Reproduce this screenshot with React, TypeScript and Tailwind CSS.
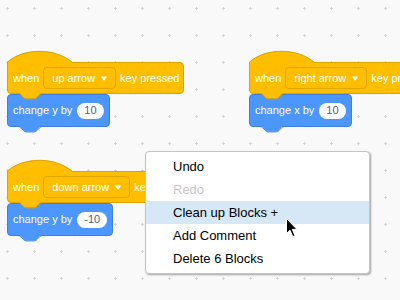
import React from "react";

const Cap = ({ fill, stroke }: { fill: string; stroke: string }) => (
  <svg
    width="67"
    height="15"
    viewBox="0 0 67 15"
    className="absolute left-[-1px] top-[-13px] overflow-visible"
  >
    <path d="M0,15 L0,12 C17,-2.8 48,-2.8 65.5,12.5 L65.5,15 Z" fill={fill} />
    <path d="M0.5,15 L0.5,12 C17.4,-2.3 48,-2.3 65.3,12.3" fill="none" stroke={stroke} strokeWidth="1" />
  </svg>
);

const Tab = ({ fill, stroke }: { fill: string; stroke: string }) => (
  <svg width="26" height="7" viewBox="0 0 26 7" className="absolute left-[10px] top-full overflow-visible">
    <path
      d="M0,-1 L0,0 c1.35,0 2.03,0.68 2.7,1.35 l2.7,2.7 c0.68,0.68 1.35,1.35 2.7,1.35 h8.1 c1.35,0 2.03,-0.68 2.7,-1.35 l2.7,-2.7 c0.68,-0.68 1.35,-1.35 2.7,-1.35 L24.3,-1 Z"
      fill={fill}
    />
    <path
      d="M0,0.5 c1.35,0 2.03,0.68 2.7,1.35 l2.7,2.7 c0.68,0.68 1.35,1.35 2.7,1.35 h8.1 c1.35,0 2.03,-0.68 2.7,-1.35 l2.7,-2.7 c0.68,-0.68 1.35,-1.35 2.7,-1.35"
      fill="none"
      stroke={stroke}
      strokeWidth="1"
    />
  </svg>
);

const Dropdown = ({ label }: { label: string }) => (
  <div className="flex h-[22px] items-center rounded-[4px] border border-[#e0a700] pl-[8px] pr-[8px]">
    <span>{label}</span>
    <svg width="6" height="5" viewBox="0 0 6 5" className="ml-[6px]">
      <path d="M0.8,1 L5.2,1 L3,3.8 Z" fill="white" stroke="white" strokeWidth="1.2" strokeLinejoin="round" />
    </svg>
  </div>
);

const Script = ({ keyName, verb, value, pos }: { keyName: string; verb: string; value: string; pos: string }) => (
  <div className={`absolute flex flex-col items-start ${pos}`}>
    <div className="relative z-10 flex h-[32px] w-max items-center gap-[4px] rounded-r-[4px] rounded-bl-[4px] border border-[#dba400] bg-[#ffbf00] pl-[5px] pr-[4px] text-white">
      <Cap fill="#ffbf00" stroke="#dba400" />
      <span>when</span>
      <Dropdown label={keyName} />
      <span>key pressed</span>
      <Tab fill="#ffbf00" stroke="#dba400" />
    </div>
    <div className="relative flex h-[33px] w-max items-center gap-[5px] rounded-[4px] border border-[#3f80dc] bg-[#4c97ff] pl-[5px] pr-[5px] text-white">
      <span>{verb}</span>
      <div className="flex h-[16px] items-center rounded-full bg-white px-[7px] text-[#575e75]">{value}</div>
      <Tab fill="#4c97ff" stroke="#3f80dc" />
    </div>
  </div>
);

export default function App() {
  return (
    <div className="relative h-[300px] w-[400px] overflow-hidden bg-[#f9f9f9] bg-[radial-gradient(circle,#d6d6d6_1px,transparent_1.4px)] bg-[length:27px_27px] bg-[position:-6px_-5px] font-['Liberation_Sans',Arial,sans-serif] text-[11px]">
      <Script keyName="up arrow" verb="change y by" value="10" pos="left-[7px] top-[62px]" />
      <Script keyName="right arrow" verb="change x by" value="10" pos="left-[249px] top-[62px]" />
      <Script keyName="down arrow" verb="change y by" value="-10" pos="left-[7px] top-[171px]" />

      <div className="absolute left-[145px] top-[151px] z-20 flex w-[225px] flex-col rounded-[4px] border border-[#c4c4c4] bg-white py-[3px] text-[13px] text-black shadow-[1px_1px_2px_rgba(0,0,0,0.35)]">
        <div className="flex h-[23px] items-center pl-[27px]">Undo</div>
        <div className="flex h-[23px] items-center pl-[27px] text-[#c8c8c8]">Redo</div>
        <div className="flex h-[23px] items-center bg-[#d6e7f6] pl-[27px]">Clean up Blocks +</div>
        <div className="flex h-[23px] items-center pl-[27px]">Add Comment</div>
        <div className="flex h-[23px] items-center pl-[27px]">Delete 6 Blocks</div>
      </div>

      <svg width="14" height="22" viewBox="0 0 14 22" className="absolute left-[285px] top-[217px] z-30">
        <path d="M1.5,1.5 L1.5,16.5 L5,13.2 L7.8,19.6 L10,18.6 L7.3,12.4 L12,12.4 Z" fill="black" stroke="white" strokeWidth="1" strokeLinejoin="round" />
      </svg>
    </div>
  );
}
